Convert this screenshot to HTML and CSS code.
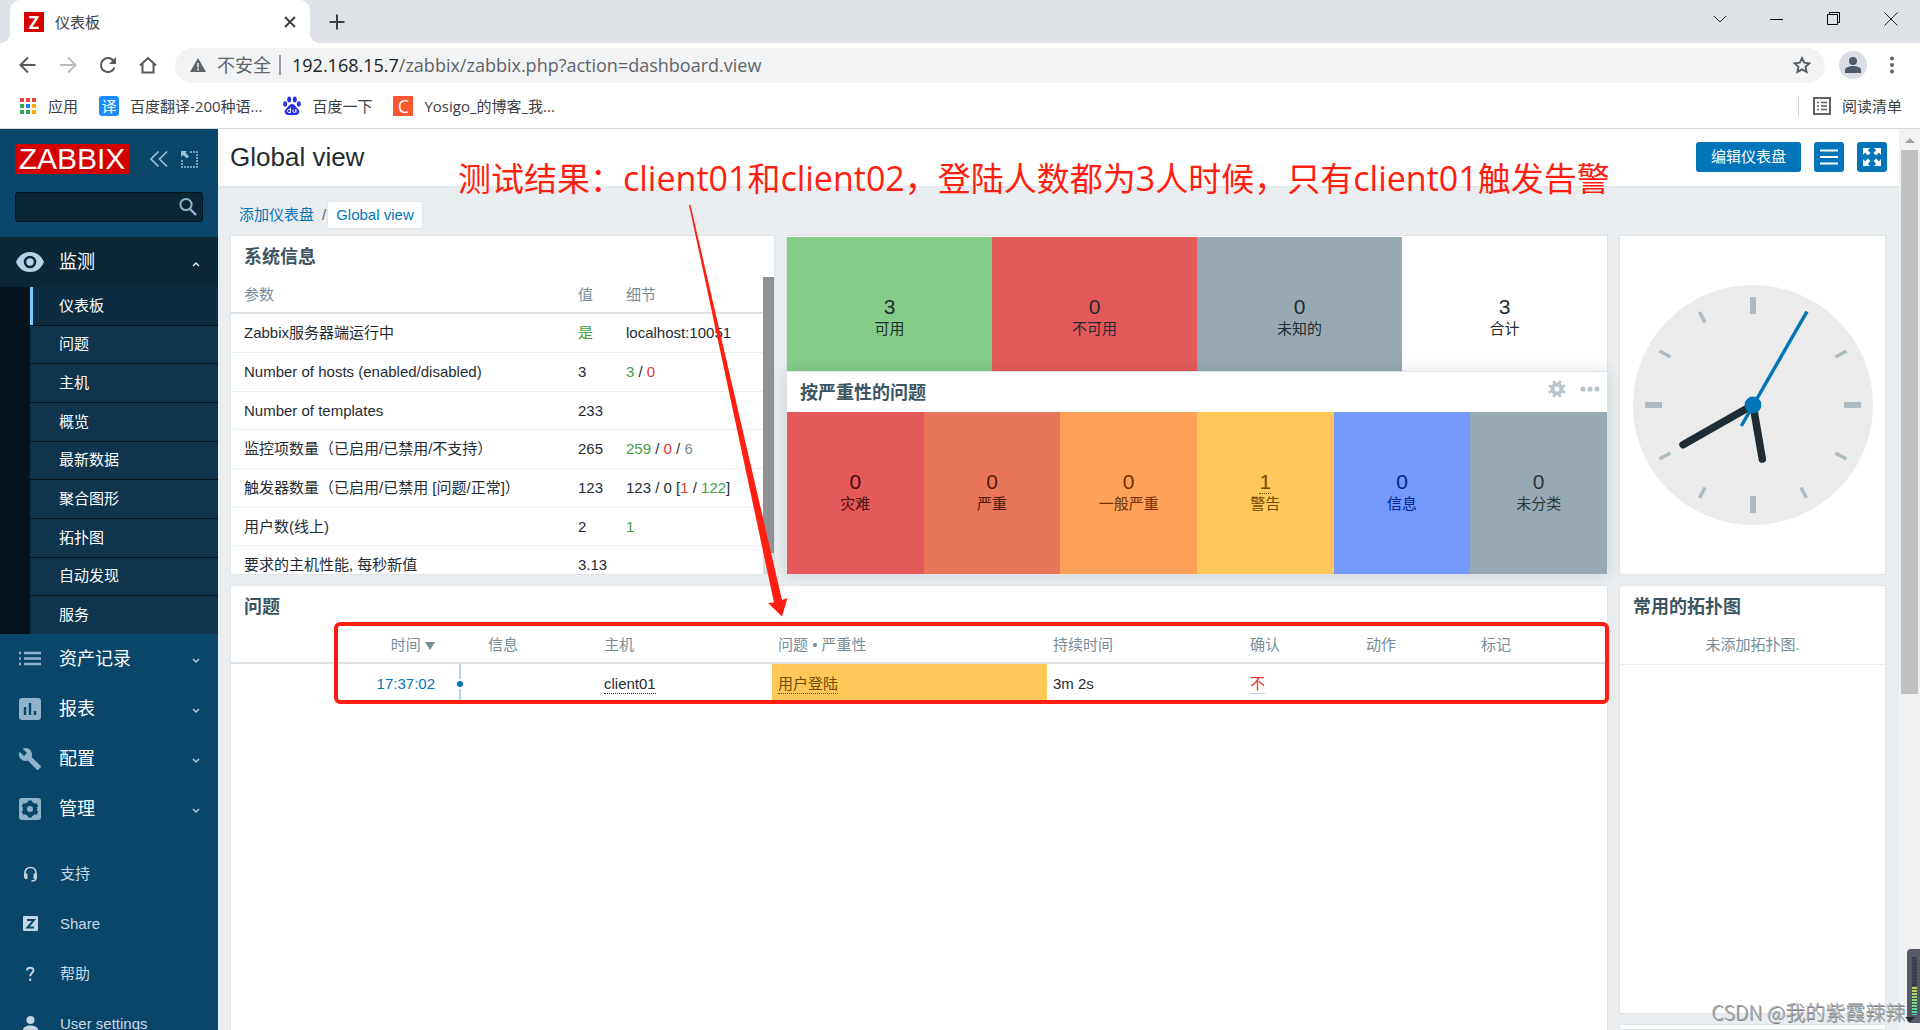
FILE: index.html
```html
<!DOCTYPE html>
<html lang="zh-CN">
<head>
<meta charset="utf-8">
<title>仪表板</title>
<link rel="stylesheet" href="styles.css">
</head>
<body>
<header class="browser">
  <div class="tabstrip">
    <div class="tab">
      <span class="favicon favicon-z">Z</span>
      <span class="tab-title">仪表板</span>
      <button class="icon-btn tab-close" aria-label="关闭标签页"><svg width="12" height="12" viewBox="0 0 12 12"><path d="M1 1l10 10M11 1L1 11" stroke="#3c4043" stroke-width="2"/></svg></button>
    </div>
    <button class="icon-btn new-tab" aria-label="新标签页"><svg width="16" height="16" viewBox="0 0 16 16"><path d="M8 .5v15M.5 8h15" stroke="#3c4043" stroke-width="2"/></svg></button>
    <div class="window-controls">
      <button class="icon-btn" aria-label="搜索标签页"><svg width="14" height="14" viewBox="0 0 14 14"><path d="M1 4l6 6 6-6" fill="none" stroke="#222"/></svg></button>
      <button class="icon-btn" aria-label="最小化"><svg width="14" height="14" viewBox="0 0 14 14"><path d="M0 7.500h13" stroke="#000"/></svg></button>
      <button class="icon-btn" aria-label="还原"><svg width="14" height="14" viewBox="0 0 14 14"><path d="M.5 2.500h10v10H.5zM2.500 2V.5h10v10H11" fill="none" stroke="#000"/></svg></button>
      <button class="icon-btn" aria-label="关闭"><svg width="14" height="14" viewBox="0 0 14 14"><path d="M.5.5l13 13M13.500.5l-13 13" stroke="#222"/></svg></button>
    </div>
  </div>
  <div class="toolbar">
    <nav class="nav-buttons" aria-label="导航">
      <button class="icon-btn" aria-label="后退"><svg width="20" height="20" viewBox="0 0 20 20"><path d="M17.500 10H3M10 2.500L2.500 10l7.500 7.500" fill="none" stroke="#54585d" stroke-width="2"/></svg></button>
      <button class="icon-btn" aria-label="前进"><svg width="20" height="20" viewBox="0 0 20 20"><path d="M2 10h15M10 2.500l7.500 7.500-7.500 7.500" fill="none" stroke="#babcbe" stroke-width="2"/></svg></button>
      <button class="icon-btn" aria-label="刷新"><svg width="20" height="20" viewBox="0 0 20 20"><path d="M16.500 12.500A7 7 0 1 1 15 5.200L17 7" fill="none" stroke="#54585d" stroke-width="2"/><path d="M18 2v7h-7z" fill="#54585d"/></svg></button>
      <button class="icon-btn" aria-label="主页"><svg width="20" height="20" viewBox="0 0 20 20"><path d="M2 10.500L10 3l8 7.500M4.500 9v8.500h11V9" fill="none" stroke="#54585d" stroke-width="2"/></svg></button>
    </nav>
    <div class="omnibox">
      <svg width="16" height="16" viewBox="0 0 16 16"><path d="M8 1l8 14H0z" fill="#5f6368"/><path d="M8 6v4.500M8 11.500v2" stroke="#f1f3f4" stroke-width="1.500"/></svg>
      <span class="insecure">不安全</span>
      <span class="omni-sep"></span>
      <span class="url"><b>192.168.15.7</b>/zabbix/zabbix.php?action=dashboard.view</span>
      <button class="icon-btn" aria-label="收藏"><svg width="20" height="20" viewBox="0 0 20 20"><path d="M10 3l2.200 4.700 5.200.6-3.900 3.500 1.100 5.200-4.600-2.600-4.600 2.600 1.100-5.200-3.900-3.500 5.200-.6z" fill="none" stroke="#54585d" stroke-width="1.800"/></svg></button>
    </div>
    <button class="icon-btn avatar" aria-label="用户"><svg width="28" height="28" viewBox="0 0 28 28"><circle cx="14" cy="14" r="14" fill="#dadde3"/><circle cx="14" cy="10" r="4" fill="#505a6b"/><path d="M6 22v-3c0-3 5-4 8-4s8 1 8 4v3z" fill="#505a6b"/></svg></button>
    <button class="icon-btn" aria-label="更多"><svg width="4" height="18" viewBox="0 0 4 18"><g fill="#5f6368"><circle cx="2" cy="2.500" r="2"/><circle cx="2" cy="9" r="2"/><circle cx="2" cy="15.500" r="2"/></g></svg></button>
  </div>
  <nav class="bookmarks" aria-label="书签">
    <a href="#"><svg width="18" height="18" viewBox="0 0 18 18"><g fill="#ea4335"><path d="M1 1h4v4H1zM7 1h4v4H7zM13 1h4v4h-4z"/></g><path d="M1 7h4v4H1zM1 13h4v4H1zM7 13h4v4H7z" fill="#34a853"/><path d="M7 7h4v4H7z" fill="#1a83f0"/><path d="M13 7h4v4h-4zM13 13h4v4h-4z" fill="#fbab04"/></svg>应用</a>
    <a href="#"><span class="favicon favicon-yi">译</span>百度翻译-200种语...</a>
    <a href="#"><svg width="18" height="20" viewBox="0 0 18 20"><g fill="#2932e1"><ellipse cx="6.200" cy="3.500" rx="2" ry="3"/><ellipse cx="11.800" cy="3.500" rx="2" ry="3"/><ellipse cx="2.200" cy="8" rx="2" ry="2.800"/><ellipse cx="15.800" cy="8" rx="2" ry="2.800"/><path d="M9 8c3 0 4 3.500 6 5s2 5.500-2 6c-2 .2-6 .2-8 0-4-.5-4-4.500-2-6s3-5 6-5z"/></g><path d="M7.500 11.500v5H6c-2 0-2-3 0-3h1.500M10 13.500v2c0 1.200 2.800 1.200 2.800 0v-2 3" stroke="#fff" fill="none"/></svg>百度一下</a>
    <a href="#"><span class="favicon favicon-c">C</span>Yosigo_的博客_我...</a>
    <a href="#" class="reading"><svg width="18" height="18" viewBox="0 0 18 18"><path d="M1 1h16v16H1z" fill="none" stroke="#5f6368" stroke-width="2"/><path d="M4 5.500h2M4 9h2M4 12.500h2M8 5.500h6M8 9h6M8 12.500h6" stroke="#5f6368" stroke-width="1.500"/></svg>阅读清单</a>
  </nav>
</header>

<div class="page">
  <aside class="sidebar">
    <div class="brand">
      <a href="#" class="logo">ZABBIX</a>
      <button class="icon-btn" aria-label="收起"><svg width="20" height="20" viewBox="0 0 20 20"><path d="M9.500 2.500L2 10l7.500 7.500M18 2.500L10.500 10l7.500 7.500" fill="none" stroke="#9cc0d8" stroke-width="1.700"/></svg></button>
      <button class="icon-btn" aria-label="隐藏"><svg width="17" height="17" viewBox="0 0 17 17"><path d="M9 1h7v15H1V9" fill="none" stroke="#9cc0d8" stroke-width="1.500" stroke-dasharray="2 1"/><path d="M0 0h6L4.500 1.500 8 5.500 6 7.500 2 4 0 6z" fill="#9cc0d8"/></svg></button>
    </div>
    <form class="search">
      <input type="text" aria-label="搜索">
      <button type="button" class="icon-btn" aria-label="搜索"><svg width="18" height="20" viewBox="0 0 18 20"><circle cx="7" cy="7.500" r="5.600" fill="none" stroke="#8fb3ca" stroke-width="2"/><path d="M11 12l6 6" stroke="#8fb3ca" stroke-width="2.400"/></svg></button>
    </form>
    <nav class="menu" aria-label="主菜单">
      <a href="#" class="menu-item is-open"><svg width="28" height="24" viewBox="0 0 28 24"><path d="M0 12C3 5 8 2 14 2s11 3 14 10c-3 7-8 10-14 10S3 19 0 12z" fill="#b4d3ea"/><circle cx="14" cy="12" r="5" fill="#b4d3ea" stroke="#0a2738" stroke-width="2.600"/></svg><span>监测</span><svg class="caret" width="8" height="6" viewBox="0 0 8 6"><path d="M1 5l3-3 3 3" fill="none" stroke="#e0ecf3" stroke-width="1.500"/></svg></a>
      <div class="submenu">
        <a href="#" class="is-selected">仪表板</a>
        <a href="#">问题</a>
        <a href="#">主机</a>
        <a href="#">概览</a>
        <a href="#">最新数据</a>
        <a href="#">聚合图形</a>
        <a href="#">拓扑图</a>
        <a href="#">自动发现</a>
        <a href="#">服务</a>
      </div>
      <a href="#" class="menu-item"><svg width="28" height="24" viewBox="0 0 28 24"><path d="M3 6h2M3 11.500h2M3 17h2M8 6h17M8 11.500h17M8 17h17" stroke="#8fb3ca" stroke-width="2.400"/></svg><span>资产记录</span><svg class="caret" width="8" height="6" viewBox="0 0 8 6"><path d="M1 1l3 3 3-3" fill="none" stroke="#b5cbd9" stroke-width="1.500"/></svg></a>
      <a href="#" class="menu-item"><svg width="28" height="24" viewBox="0 0 28 24"><rect x="3" y="1" width="22" height="22" rx="3" fill="#8fb3ca"/><path d="M9 18v-8M14 18V6M19 18v-4" stroke="#0a466a" stroke-width="2.400"/></svg><span>报表</span><svg class="caret" width="8" height="6" viewBox="0 0 8 6"><path d="M1 1l3 3 3-3" fill="none" stroke="#b5cbd9" stroke-width="1.500"/></svg></a>
      <a href="#" class="menu-item"><svg width="28" height="24" viewBox="2 0 24 24"><path d="M24.700 19l-9.100-9.100c.9-2.300.4-5-1.500-6.900-2-2-5-2.400-7.400-1.300L11 6 8 9 3.600 4.700C2.400 7.100 2.900 10.100 4.900 12.100c1.900 1.900 4.600 2.400 6.900 1.500l9.100 9.100c.4.4 1 .4 1.400 0l2.300-2.300c.5-.4.5-1.100.1-1.400z" fill="#8fb3ca"/></svg><span>配置</span><svg class="caret" width="8" height="6" viewBox="0 0 8 6"><path d="M1 1l3 3 3-3" fill="none" stroke="#b5cbd9" stroke-width="1.500"/></svg></a>
      <a href="#" class="menu-item"><svg width="28" height="24" viewBox="0 0 28 24"><rect x="3" y="1" width="22" height="22" rx="3" fill="#8fb3ca"/><circle cx="14" cy="12" r="5" fill="none" stroke="#0a466a" stroke-width="4.500"/><path d="M14 3.500v17M6.600 7.800l14.800 8.500M6.600 16.300l14.800-8.500" stroke="#0a466a" stroke-width="4"/><circle cx="14" cy="12" r="3" fill="#8fb3ca"/></svg><span>管理</span><svg class="caret" width="8" height="6" viewBox="0 0 8 6"><path d="M1 1l3 3 3-3" fill="none" stroke="#b5cbd9" stroke-width="1.500"/></svg></a>
    </nav>
    <nav class="menu-user" aria-label="用户菜单">
      <a href="#"><svg width="28" height="16" viewBox="0 0 28 16"><path d="M9 9V7.500C9 3.500 11 1.500 14.500 1.500S20 3.500 20 7.500V12c0 2-1.500 3-4.500 3" fill="none" stroke="#c5d5e0" stroke-width="1.600"/><path d="M8 7.500h3.500V13H10c-1 0-2-1-2-2zM21 7.500h-3.500V13H19c1 0 2-1 2-2z" fill="#c5d5e0"/></svg><span>支持</span></a>
      <a href="#"><svg width="28" height="16" viewBox="0 0 28 16"><rect x="7" y="0" width="15" height="15" rx="1" fill="#c5d5e0"/><path d="M11 4h7l-6.500 7.500H18" fill="none" stroke="#0a466a" stroke-width="2"/></svg><span>Share</span></a>
      <a href="#"><svg width="28" height="16" viewBox="0 0 28 16"><path d="M11 4.500C11 .8 17.500.8 17.500 4.300c0 2.700-3.300 2.700-3.300 6M14.200 12.500V15" fill="none" stroke="#c5d5e0" stroke-width="2"/></svg><span>帮助</span></a>
      <a href="#"><svg width="28" height="16" viewBox="0 0 28 16"><circle cx="14.500" cy="4" r="4" fill="#c5d5e0"/><path d="M7 16v-2c0-3 4-4.500 7.500-4.500S22 11 22 14v2z" fill="#c5d5e0"/></svg><span>User settings</span></a>
    </nav>
  </aside>

  <main class="content">
    <div class="title-bar">
      <h1>Global view</h1>
      <button class="btn">编辑仪表盘</button>
      <button class="btn btn-icon" aria-label="操作"><svg width="18" height="16" viewBox="0 0 18 16"><path d="M0 1.500h18M0 8h18M0 14.500h18" stroke="#fff" stroke-width="2"/></svg></button>
      <button class="btn btn-icon" aria-label="全屏"><svg width="18" height="18" viewBox="0 0 18 18"><g fill="#fff"><path d="M0 0h7L4.800 2.200 7.500 5 5 7.500 2.200 4.800 0 7z"/><path d="M18 0v7l-2.200-2.200L13 7.500 10.500 5l2.700-2.800L11 0zM18 18h-7l2.200-2.200L10.500 13l2.500-2.500 2.800 2.700L18 11zM0 18v-7l2.200 2.200L5 10.500 7.500 13l-2.700 2.800L7 18z"/></g></svg></button>
    </div>
    <nav class="crumbs" aria-label="路径">
      <a href="#">添加仪表盘</a><span>/</span><a href="#" class="current">Global view</a>
    </nav>
    <div class="dashboard">
      <section class="widget sysinfo">
        <h2>系统信息</h2>
        <div class="scroller">
          <table class="list">
            <colgroup><col><col class="c-val"><col class="c-detail"></colgroup>
            <thead><tr><th>参数</th><th>值</th><th>细节</th></tr></thead>
            <tbody>
              <tr><td>Zabbix服务器端运行中</td><td class="green">是</td><td>localhost:10051</td></tr>
              <tr><td>Number of hosts (enabled/disabled)</td><td>3</td><td><span class="green">3</span> / <span class="red">0</span></td></tr>
              <tr><td>Number of templates</td><td>233</td><td></td></tr>
              <tr><td>监控项数量（已启用/已禁用/不支持）</td><td>265</td><td><span class="green">259</span> / <span class="red">0</span> / <span class="grey">6</span></td></tr>
              <tr><td>触发器数量（已启用/已禁用 [问题/正常]）</td><td>123</td><td>123 / 0 [<span class="red">1</span> / <span class="green">122</span>]</td></tr>
              <tr><td>用户数(线上)</td><td>2</td><td class="green">1</td></tr>
              <tr><td>要求的主机性能, 每秒新值</td><td>3.13</td><td></td></tr>
            </tbody>
          </table>
          <div class="inner-bar"><div class="inner-thumb"></div></div>
        </div>
      </section>

      <div class="stack">
        <section class="widget tiles hosts">
          <div class="tile ok"><strong>3</strong>可用</div>
          <div class="tile bad"><strong>0</strong>不可用</div>
          <div class="tile unknown"><strong>0</strong>未知的</div>
          <div class="tile"><strong>3</strong>合计</div>
        </section>
        <section class="widget severity">
          <div class="widget-head">
            <h2>按严重性的问题</h2>
            <button class="icon-btn" aria-label="编辑"><svg width="18" height="18" viewBox="0 0 18 18"><circle cx="9" cy="9" r="4.500" fill="none" stroke="#b8c4cb" stroke-width="4"/><path d="M9 9m-1.500-6V0.500M9 9m1.500-6V.5" stroke="none"/><g stroke="#b8c4cb" stroke-width="2.600"><path d="M9 3.500V.2M9 3.500V.2M9 14.500v3.300" transform="rotate(22.500 9 9)"/><path d="M9 3.500V.2M9 14.500v3.300" transform="rotate(67.500 9 9)"/><path d="M9 3.500V.2M9 14.500v3.300" transform="rotate(112.500 9 9)"/><path d="M9 3.500V.2M9 14.500v3.300" transform="rotate(157.500 9 9)"/></g></svg></button>
            <button class="icon-btn" aria-label="更多操作"><svg width="20" height="6" viewBox="0 0 20 6"><g fill="#b8c4cb"><circle cx="3" cy="3" r="2.600"/><circle cx="10" cy="3" r="2.600"/><circle cx="17" cy="3" r="2.600"/></g></svg></button>
          </div>
          <div class="tiles">
            <div class="tile disaster"><strong>0</strong>灾难</div>
            <div class="tile high"><strong>0</strong>严重</div>
            <div class="tile average"><strong>0</strong>一般严重</div>
            <div class="tile warning"><strong><a href="#">1</a></strong>警告</div>
            <div class="tile info"><strong>0</strong>信息</div>
            <div class="tile none"><strong>0</strong>未分类</div>
          </div>
        </section>
      </div>

      <section class="widget clock" aria-label="时钟">
        <svg width="240" height="240" viewBox="-120 -120 240 240">
          <circle r="120" fill="#ebebeb"/>
          <path d="M0-108v17M0 108V91M-108 0h17M108 0H91" stroke="#acbbc2" stroke-width="6"/>
          <path d="M-53.500-93l5.500 10.500M53.500 93L48 82.500M-53.500 93l5.500-10.500M-93.500-54l11 6M93.500 54l-11-6M-93.500 54l11-6M93.500-54l-11 6" stroke="#acbbc2" stroke-width="3.500"/>
          <path d="M0 0l-70 39.700M0 0l9.300 54" stroke="#1f2c33" stroke-width="7.500" stroke-linecap="round"/>
          <path d="M-11.700 21L54-93.500" stroke="#0275b8" stroke-width="3.500"/>
          <circle r="8.400" fill="#0275b8"/>
        </svg>
      </section>

      <section class="widget problems">
        <h2>问题</h2>
        <table class="list">
          <colgroup><col class="p-time"><col class="p-line"><col class="p-info"><col class="p-host"><col class="p-name"><col class="p-dur"><col class="p-ack"><col class="p-act"><col class="p-tag"></colgroup>
          <thead><tr><th class="right">时间 <span class="sort"></span></th><th></th><th>信息</th><th>主机</th><th>问题 • 严重性</th><th>持续时间</th><th>确认</th><th>动作</th><th>标记</th></tr></thead>
          <tbody><tr><td class="right"><a href="#">17:37:02</a></td><td class="timeline"><span></span></td><td></td><td><a href="#" class="dotted">client01</a></td><td class="warning"><a href="#" class="dotted">用户登陆</a></td><td>3m 2s</td><td><a href="#" class="red dotted ack">不</a></td><td></td><td></td></tr></tbody>
        </table>
      </section>

      <section class="widget maps">
        <h2>常用的拓扑图</h2>
        <p>未添加拓扑图.</p>
      </section>
      <section class="widget"></section>
    </div>
  </main>
  <div class="page-bar"><i class="up"></i><div class="page-thumb"></div></div>
</div>

<p class="note">测试结果：<span>client01</span>和<span>client02</span>，登陆人数都为<span>3</span>人时候，只有<span>client01</span>触发告警</p>
<svg class="arrow" width="100" height="412" viewBox="688 205 100 412"><path d="M689 205h1.500L782 600l5.500-2L782 616.500 768 603l6-.5z" fill="#ff1e10"/></svg>
<div class="frame"></div>
<div class="meter"><div class="meter-bars"></div></div>
<div class="watermark">CSDN @我的紫霞辣辣</div>
</body>
</html>
```
FILE: styles.css
```css
* { box-sizing: border-box; }

body {
  margin: 0;
  height: 100vh;
  overflow: hidden;
  position: relative;
  display: flex;
  flex-direction: column;
  background: #fff;
  color: #1f2c33;
  font: 15px/20px "Liberation Sans", "Noto Sans CJK SC", sans-serif;
}
a { color: inherit; text-decoration: none; }
svg { display: block; flex: none; }
h1, h2, p { margin: 0; }
.icon-btn { display: block; padding: 0; border: 0; background: none; }

/* browser window */
.browser {
  flex: none;
  font-family: "Open Sans", "Noto Sans CJK SC", sans-serif;
  border-bottom: 1px solid #d6d8db;
}
.tabstrip { display: flex; align-items: center; height: 43px; background: #dee1e6; }
.tab {
  position: relative;
  display: flex;
  align-items: center;
  align-self: stretch;
  width: 300px;
  margin-left: 10px;
  padding: 0 14px;
  gap: 11px;
  border-radius: 10px 10px 0 0;
  background: #fff;
}
.tab::before, .tab::after {
  content: "";
  position: absolute;
  bottom: 0;
  width: 10px;
  height: 10px;
}
.tab::before { left: -10px; background: radial-gradient(circle at 0 0, transparent 10px, #fff 10px); }
.tab::after { right: -10px; background: radial-gradient(circle at 100% 0, transparent 10px, #fff 10px); }
.tab-title { flex: 1; color: #3c4043; }
.new-tab { margin-left: 19px; }
.window-controls { display: flex; gap: 43px; margin-left: auto; padding: 0 22px 6px 0; }
.favicon {
  display: block;
  width: 20px;
  height: 20px;
  color: #fff;
  text-align: center;
  font-size: 18px;
  line-height: 20px;
}
.favicon-z { background: #d40000; font-weight: bold; }
.favicon-yi { background: #1b8cfb; border-radius: 3px; font-size: 15px; }
.favicon-c { background: #fc5531; }
.toolbar { display: flex; align-items: center; height: 44px; padding: 0 26px 0 18px; }
.nav-buttons { display: flex; gap: 20px; }
.omnibox {
  flex: 1;
  display: flex;
  align-items: center;
  height: 35px;
  margin: 0 14px 0 17px;
  padding: 0 13px 0 15px;
  border-radius: 18px;
  background: #f1f3f4;
  color: #5f6368;
  font-size: 18px;
}
.insecure { margin-left: 11px; }
.omni-sep { width: 2px; height: 20px; margin: 0 11px 0 8px; background: #9a9da1; }
.url { flex: 1; }
.url b { font-weight: normal; color: #202124; }
.avatar { margin-right: 23px; }
.bookmarks { display: flex; align-items: center; height: 41px; padding: 0 18px 4px 19px; color: #3c4043; }
.bookmarks a { display: flex; align-items: center; gap: 11px; margin-right: 21px; }
.bookmarks .reading { margin: 0 0 0 auto; padding-left: 14px; border-left: 1px solid #d0d2d5; }

/* application */
.page { flex: 1; min-height: 0; display: flex; background: #e9edf0; }
.sidebar { flex: none; width: 218px; background: #0a466a; color: #fff; overflow: hidden; }
.brand { display: flex; align-items: center; padding: 15px 20px 0 15px; }
.logo {
  width: 114px;
  margin-right: auto;
  background: #d40000;
  text-align: center;
  font-size: 30px;
  line-height: 30px;
}
.brand .icon-btn + .icon-btn { margin-left: 12px; }
.search {
  display: flex;
  align-items: center;
  height: 30px;
  margin: 18px 15px 15px;
  padding-right: 5px;
  border: 1px solid #04141d;
  border-radius: 3px;
  background: #0a2738;
}
.search input { flex: 1; min-width: 0; border: 0; background: none; color: #fff; }
.menu-item, .menu-user a { display: flex; align-items: center; height: 50px; padding: 0 18px 0 16px; gap: 15px; }
.menu-item { font-size: 18px; }
.menu-item.is-open { background: #0a2738; }
.caret { margin: 4px 0 0 auto; }
.submenu {
  display: grid;
  grid-auto-rows: 1fr;
  gap: 1px;
  height: 347px;
  padding-left: 30px;
  background: #04141d;
}
.submenu a { display: flex; align-items: center; padding-left: 29px; background: #0f344d; }
.submenu .is-selected { padding-left: 26px; border-left: 3px solid #7ec8fb; background: #0b2c41; }
.menu-user { padding-top: 15px; }
.menu-user a { color: #c9dae5; gap: 16px; }

.content { flex: 1; min-width: 0; display: flex; flex-direction: column; }
.title-bar {
  display: flex;
  align-items: center;
  height: 58px;
  padding: 0 12px 2px;
  border-bottom: 1px solid #dfe4e7;
  background: #fff;
}
h1 { flex: 1; font-size: 26px; font-weight: normal; line-height: 30px; }
.btn {
  height: 30px;
  padding: 0 15px;
  border: 0;
  border-radius: 3px;
  background: #0275b8;
  color: #fff;
  font: inherit;
}
.btn-icon { display: grid; place-items: center; width: 30px; margin-left: 13px; padding: 0; }
.crumbs { display: flex; align-items: center; height: 26px; margin: 15px 21px 7px; color: #0275b8; }
.crumbs span { padding: 0 1px 0 8px; color: #4f6470; }
.crumbs .current { padding: 3px 8px; border-radius: 2px; background: #fff; box-shadow: 0 0 0 1px #e0e5e8; margin-left: 1px; }

.dashboard {
  flex: 1;
  min-height: 0;
  display: grid;
  grid-template-columns: 545fr 822fr 267fr;
  grid-template-rows: 340px 429px 1fr;
  gap: 10px 11px;
  padding: 0 13px 0 12px;
}
.widget { min-width: 0; border: 1px solid #dfe4e7; background: #fff; overflow: hidden; }
h2 { padding: 2px 13px 0; color: #3c5563; font-size: 18px; line-height: 39px; font-weight: bold; }
.list { width: 100%; table-layout: fixed; border-collapse: separate; border-spacing: 0; }
.list th, .list td { padding: 0 6px; text-align: left; white-space: nowrap; font-weight: normal; }
.list th { height: 37px; border-bottom: 2px solid #dce2e5; color: #768d99; }
.list td { height: 39px; border-bottom: 1px solid #ebeef0; }
.list tr:nth-child(3n) td { height: 38px; }
.list th:first-child, .list td:first-child { padding-left: 13px; }
.list .right { text-align: right; }
.green { color: #429e47; }
.red { color: #e33734; }
.grey { color: #768d99; }

.sysinfo { display: flex; flex-direction: column; }
.scroller { flex: 1; min-height: 0; display: flex; overflow: hidden; }
.scroller .list { flex: 1; align-self: flex-start; }
.c-val { width: 48px; }
.c-detail { width: 143px; }
.inner-bar { flex: none; width: 11px; background: #d5dde1; }
.inner-thumb { height: 93%; background: #929292; }

.stack { display: flex; flex-direction: column; min-width: 0; }
.tiles { display: grid; grid-auto-flow: column; grid-auto-columns: 1fr; flex: 1; }
.tile { display: flex; flex-direction: column; align-items: center; justify-content: center; padding-bottom: 4px; }
.tile strong { font-size: 21px; line-height: 25px; font-weight: normal; }
.hosts { flex: none; height: 136px; padding-top: 1px; border-bottom: 0; }
.hosts .tile { padding: 24px 0 0; }
.severity { flex: 1; display: flex; flex-direction: column; position: relative; box-shadow: 0 0 14px rgba(31, 44, 51, .14); }
.widget-head { display: flex; align-items: flex-start; height: 40px; padding-right: 7px; gap: 14px; }
.widget-head h2 { flex: 1; line-height: 38px; }
.widget-head .icon-btn { display: grid; place-items: center; height: 34px; }
.ok { background: #86cc89; }
.bad { background: #e45959; }
.unknown { background: #97aab3; }
.disaster { background: #e45959; color: #4b0c0c; }
.high { background: #e97659; color: #52190b; }
.average { background: #ffa059; color: #733100; }
.list .warning, .warning { background: #ffc859; color: #734d00; }
.info { background: #7499ff; color: #00268e; }
.none { background: #97aab3; color: #2a353a; }
.tile a, .dotted { border-bottom: 1px dotted currentColor; }
.list .ack { border-bottom: 1px solid #c9ced2; }

.clock { display: grid; place-items: center; }
.problems { grid-column: 1 / 3; grid-row: 2 / 4; border-bottom: 0; }
.problems td { border-bottom: 0; }
.problems td a { display: inline-block; line-height: 18px; }
.problems .right a { color: #0275b8; }
.p-time { width: 210px; }
.p-line { width: 41px; }
.p-info { width: 116px; }
.p-host { width: 174px; }
.p-name { width: 275px; }
.p-dur { width: 197px; }
.p-ack { width: 116px; }
.p-act { width: 115px; }
.p-tag { width: 132px; }
.sort {
  display: inline-block;
  border: 5px solid transparent;
  border-top: 8px solid #768d99;
  border-bottom: 0;
}
.list .timeline { padding: 0; background: linear-gradient(#a8d5f0, #a8d5f0) 18px 0 / 2px 100% no-repeat; }
.timeline span {
  display: block;
  width: 10px;
  height: 10px;
  margin-left: 14px;
  border: 2px solid #fff;
  border-radius: 5px;
  background: #0275b8;
}
.maps p { padding: 8px 0 9px; border-bottom: 1px solid #ebeef0; color: #768d99; text-align: center; }

.page-bar { flex: none; width: 21px; padding: 9px 2px 0; background: #f1f1f1; }
.up { display: block; width: 0; margin: 0 auto; border: 5px solid transparent; border-top: 0; border-bottom: 5px solid #a3a3a3; }
.page-thumb { height: 61%; margin-top: 7px; background: #c1c1c1; }

/* markup drawn over the page */
.note {
  position: absolute;
  left: 458px;
  top: 157px;
  color: #ff1e10;
  font: 33px/42px "Open Sans", "Noto Sans CJK SC", sans-serif;
  white-space: nowrap;
}
.note span { font-size: 34px; }
.arrow { position: absolute; left: 688px; top: 205px; }
.frame {
  position: absolute;
  left: 334px;
  right: 311px;
  top: 622px;
  height: 82px;
  border: 4px solid #ff1e10;
  border-radius: 6px;
}
.meter {
  position: absolute;
  right: 0;
  bottom: 7px;
  width: 13px;
  height: 74px;
  padding: 8px 3px 8px 5px;
  border-radius: 4px 0 0 4px;
  background: #555a69;
}
.meter::after {
  content: "";
  position: absolute;
  left: -2px;
  bottom: 1px;
  border: 5px solid transparent;
  border-top: 5px solid #23252c;
  border-bottom: 0;
}
.meter-bars {
  height: 58px;
  background:
    repeating-linear-gradient(transparent 0 2px, #454957 2px 3px),
    linear-gradient(#3a3e4a 0 50%, #c9d64e 50%, #4fd6a8);
}
.watermark {
  position: absolute;
  right: 15px;
  bottom: 4px;
  color: #a4a8ab;
  font: 300 20px/28px "Noto Sans CJK SC", sans-serif;
  text-shadow: 1px 1px 0 #808487;
}
```
